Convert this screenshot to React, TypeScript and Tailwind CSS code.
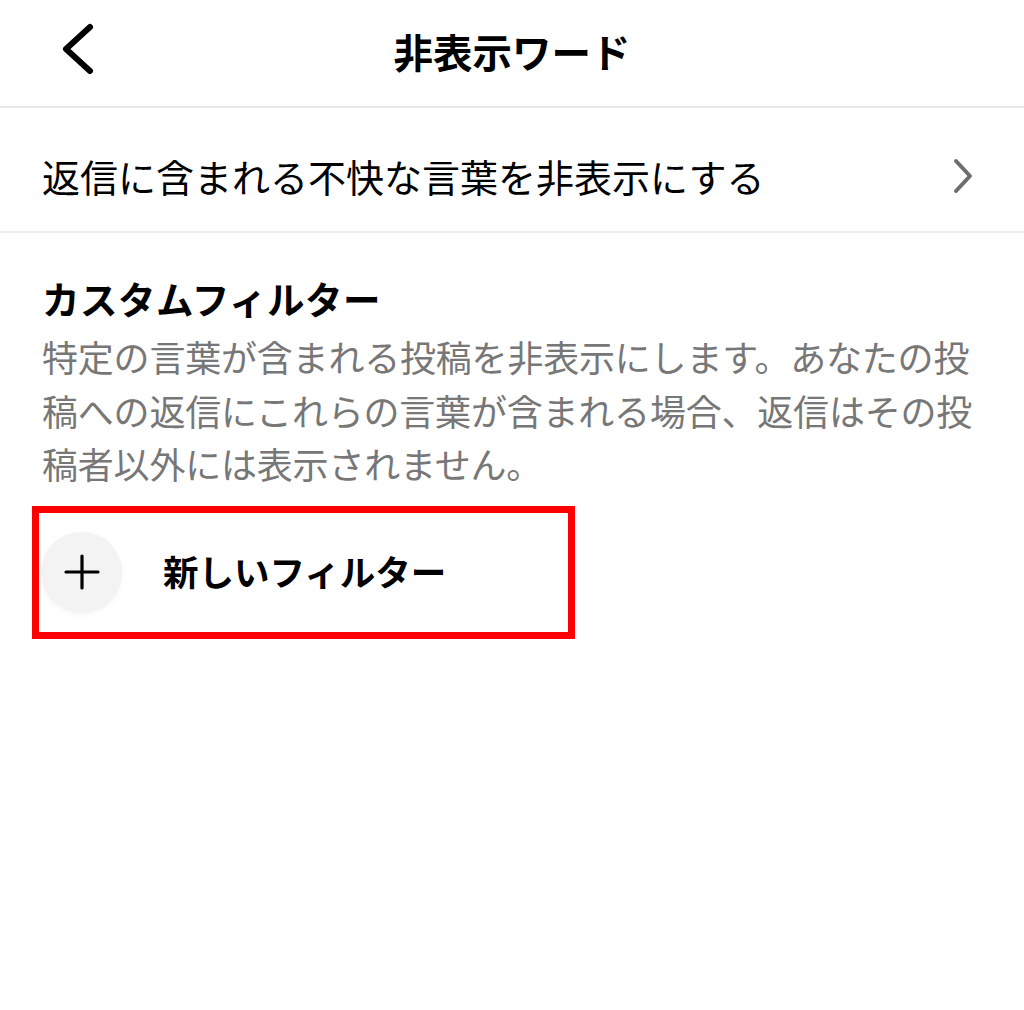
const font = { fontFamily: '"Noto Sans CJK JP", "Noto Sans", sans-serif' };

export default function App() {
    return (
        <div className="w-[1024px] h-[1010px] bg-white text-black" style={font}>
            {/* Header */}
            <div className="h-[108px] grid grid-cols-[140px_1fr_140px] items-center border-b-2 border-[#e6e6e6]">
                <div className="pl-[58px] flex items-center -mt-[8px]">
                    <svg width="40" height="56" viewBox="0 0 40 56" fill="none" stroke="black" strokeWidth="6" strokeLinecap="round" strokeLinejoin="round">
                        <path d="M32 6L8 28L32 50" />
                    </svg>
                </div>
                <h1 className="text-center text-[39.5px] font-bold leading-none -mt-[4px]">非表示ワード</h1>
                <div></div>
            </div>

            {/* Hide offensive words row */}
            <div className="h-[125px] flex items-center justify-between pl-[42px] pr-[49px] pt-[12px] border-b-2 border-[#ededed]">
                <span className="text-[38px] leading-none">返信に含まれる不快な言葉を非表示にする</span>
                <svg width="24" height="36" viewBox="0 0 24 36" fill="none" stroke="#6e6e6e" strokeWidth="4" strokeLinecap="round" strokeLinejoin="round">
                    <path d="M5 3L19 18L5 33" />
                </svg>
            </div>

            {/* Custom filter */}
            <div className="px-[42px] pt-[38px]">
                <h2 className="text-[37.5px] font-bold leading-[54px] tracking-[0.5px]">カスタムフィルター</h2>
                <p className="text-[36px] leading-[53.5px] tracking-[-0.2px] text-[#777777] mt-[5px] whitespace-nowrap">
                    特定の言葉が含まれる投稿を非表示にします。あなたの投<br />
                    稿への返信にこれらの言葉が含まれる場合、返信はその投<br />
                    稿者以外には表示されません。
                </p>
            </div>

            {/* New filter (highlighted) */}
            <div className="ml-[32px] mt-[15px] w-[543px] h-[133px] border-[7px] border-[#ff0000] flex items-center pl-[2px]">
                <div className="w-[81px] h-[81px] rounded-full bg-[#f3f3f3] shadow-[0_2px_6px_rgba(0,0,0,0.04)] flex items-center justify-center">
                    <svg width="36" height="36" viewBox="0 0 36 36" fill="none" stroke="black" strokeWidth="3.2" strokeLinecap="round">
                        <path d="M18 2v32M2 18h32" />
                    </svg>
                </div>
                <span className="ml-[41px] text-[35.5px] font-bold leading-none -mt-[2px]">新しいフィルター</span>
            </div>
        </div>
    );
}
